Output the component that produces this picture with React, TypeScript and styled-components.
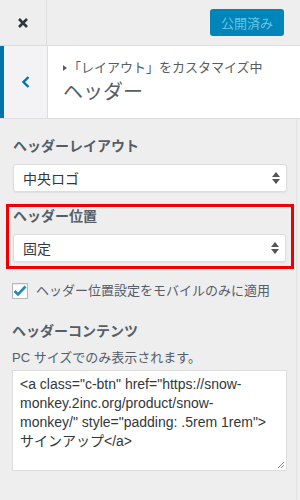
import React from "react";
import styled, { createGlobalStyle } from "styled-components";

const GlobalStyle = createGlobalStyle`
  html, body {
    margin: 0;
    padding: 0;
    background: #eee;
  }
  body {
    font-family: "Liberation Sans", "Noto Sans CJK JP", sans-serif;
    color: #555d66;
  }
`;

const Pane = styled.div`
  width: 300px;
  height: 500px;
  background: #eee;
  overflow: hidden;
`;

const TopBar = styled.div`
  display: flex;
  align-items: center;
  justify-content: space-between;
  height: 45px;
  border-bottom: 1px solid #ddd;
`;

const CloseButton = styled.div`
  width: 47px;
  height: 45px;
  display: flex;
  align-items: center;
  justify-content: center;
  border-right: 1px solid #ddd;
  box-sizing: border-box;
`;

const PublishButton = styled.div`
  margin-right: 16px;
  width: 74px;
  height: 27px;
  border-radius: 3px;
  background: #0085ba;
  color: #66c6e4;
  font-size: 13px;
  display: flex;
  align-items: center;
  justify-content: center;
`;

const SectionHeader = styled.div`
  display: flex;
  height: 72px;
  background: #fff;
  border-bottom: 1px solid #ddd;
`;

const BackButton = styled.div`
  width: 48px;
  box-sizing: border-box;
  border-left: 4px solid #0073aa;
  border-right: 1px solid #ddd;
  background: #f3f3f5;
  display: flex;
  align-items: center;
  justify-content: center;
`;

const HeaderText = styled.div`
  padding: 13px 0 0 15px;
`;

const Crumb = styled.div`
  font-size: 13px;
  line-height: 18px;
  color: #555d66;
  display: flex;
  align-items: center;
`;

const Triangle = styled.span`
  display: inline-block;
  width: 0;
  height: 0;
  border-top: 3px solid transparent;
  border-bottom: 3px solid transparent;
  border-left: 4px solid #555d66;
  margin-right: 1px;
`;

const Title = styled.div`
  font-size: 20px;
  line-height: 28px;
  margin-top: 1px;
  color: #555d66;
`;

const Body = styled.div`
  padding: 18px 0 0;
  border-right: 1px solid #e2e2e2;
  width: 297px;
  height: 400px;
  box-sizing: border-box;
`;

const Control = styled.div<{ $highlight?: boolean }>`
  margin: ${p => (p.$highlight ? "12px 2px 0 6px" : "0 0 0 13px")};
  padding: ${p => (p.$highlight ? "0 5px 4px 4px" : "0")};
  border: ${p => (p.$highlight ? "3px solid #ee0000" : "none")};
  width: ${p => (p.$highlight ? "auto" : "274px")};
`;

const Label = styled.div`
  font-size: 14px;
  font-weight: bold;
  line-height: 18px;
  color: #555d66;
  margin-bottom: 9px;
`;

const Select = styled.div`
  height: 28px;
  box-sizing: border-box;
  background: #fff;
  border: 1px solid #ddd;
  border-radius: 3px;
  box-shadow: 0 1px 2px rgba(0, 0, 0, 0.06);
  display: flex;
  align-items: center;
  justify-content: space-between;
  padding: 0 6px 0 9px;
  font-size: 14px;
  color: #32373c;
`;

const CheckRow = styled.label`
  display: flex;
  align-items: center;
  margin: 14px 0 0 12px;
  font-size: 13px;
  line-height: 16px;
  color: #555d66;
`;

const CheckBox = styled.span`
  width: 16px;
  height: 16px;
  box-sizing: border-box;
  border: 1px solid #b4b9be;
  background: #fff;
  box-shadow: inset 0 1px 2px rgba(0, 0, 0, 0.1);
  display: flex;
  align-items: center;
  justify-content: center;
  margin-right: 8px;
`;

const ContentControl = styled.div`
  margin: 23px 0 0 12px;
  width: 275px;
`;

const Description = styled.div`
  font-size: 13px;
  line-height: 18px;
  color: #555d66;
  margin: 0 0 3px;
`;

const TextArea = styled.div`
  position: relative;
  height: 101px;
  box-sizing: border-box;
  background: #fff;
  border: 1px solid #ddd;
  padding: 4px 18px 4px 7px;
  font-size: 14px;
  line-height: 19px;
  color: #32373c;
  word-break: normal;
  overflow-wrap: break-word;
`;

const Grip = styled.svg`
  position: absolute;
  right: 1px;
  bottom: 1px;
`;

const SelectArrows = () => (
  <svg width="8" height="12" viewBox="0 0 8 12">
    <path d="M4 0 L8 5 L0 5 Z" fill="#555" />
    <path d="M4 12 L8 7 L0 7 Z" fill="#555" />
  </svg>
);

export default function App() {
  return (
    <Pane>
      <GlobalStyle />
      <TopBar>
        <CloseButton>
          <svg width="12" height="12" viewBox="0 0 12 12">
            <path d="M2 2 L10 10 M10 2 L2 10" stroke="#32373c" strokeWidth="2.6" />
          </svg>
        </CloseButton>
        <PublishButton>公開済み</PublishButton>
      </TopBar>

      <SectionHeader>
        <BackButton>
          <svg width="10" height="14" viewBox="0 0 10 14">
            <path d="M7.5 2 L2.5 7 L7.5 12" stroke="#0073aa" strokeWidth="2.4" fill="none" />
          </svg>
        </BackButton>
        <HeaderText>
          <Crumb>
            <Triangle />
            「レイアウト」をカスタマイズ中
          </Crumb>
          <Title>ヘッダー</Title>
        </HeaderText>
      </SectionHeader>

      <Body>
        <Control>
          <Label>ヘッダーレイアウト</Label>
          <Select>
            中央ロゴ
            <SelectArrows />
          </Select>
        </Control>

        <Control $highlight>
          <Label>ヘッダー位置</Label>
          <Select>
            固定
            <SelectArrows />
          </Select>
        </Control>

        <CheckRow>
          <CheckBox>
            <svg width="14" height="12" viewBox="0 0 14 12">
              <path d="M1.5 6 L5 9.5 L12.5 1.5" stroke="#1e8cbe" strokeWidth="2.6" fill="none" />
            </svg>
          </CheckBox>
          ヘッダー位置設定をモバイルのみに適用
        </CheckRow>

        <ContentControl>
          <Label>ヘッダーコンテンツ</Label>
          <Description>PC サイズでのみ表示されます。</Description>
          <TextArea>
            &lt;a class="c-btn" href="https://snow-monkey.2inc.org/product/snow-monkey/" style="padding: .5rem 1rem"&gt;サインアップ&lt;/a&gt;
            <Grip width="8" height="8" viewBox="0 0 8 8">
              <path d="M7 1 L1 7 M7 4 L4 7" stroke="#888" strokeWidth="1" />
            </Grip>
          </TextArea>
        </ContentControl>
      </Body>
    </Pane>
  );
}
